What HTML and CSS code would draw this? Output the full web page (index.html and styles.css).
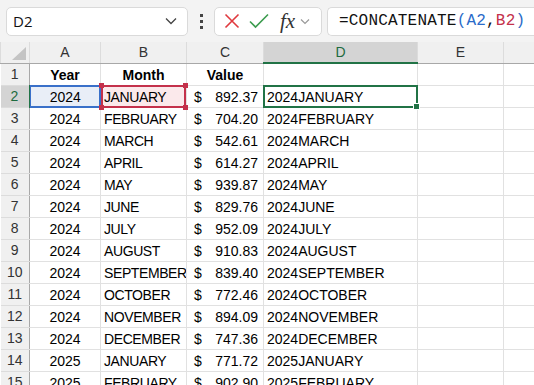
FILE: index.html
```html
<!DOCTYPE html>
<html lang="en">
<head>
    <meta charset="UTF-8">
    <title>Sheet</title>
    <link rel="stylesheet" href="styles.css">
</head>
<body>
    <div class="formula-bar">
        <div class="name-box">
            <span>D2</span>
            <svg class="chev" width="12" height="8" viewBox="0 0 12 8"><path d="M1 1.5 L6 6.5 L11 1.5" fill="none" stroke="#444" stroke-width="1.3"/></svg>
        </div>
        <div class="dots"><i></i><i></i><i></i></div>
        <div class="fx-box">
            <svg width="16" height="16" viewBox="0 0 16 16"><path d="M1.5 1.5 L14.5 14.5 M14.5 1.5 L1.5 14.5" stroke="#e0393e" stroke-width="1.6" fill="none"/></svg>
            <svg width="20" height="16" viewBox="0 0 20 16"><path d="M1 8.5 L6.5 14 L19 1.5" stroke="#3c9c4f" stroke-width="1.6" fill="none"/></svg>
            <span class="fx">fx</span>
            <svg width="10" height="7" viewBox="0 0 10 7"><path d="M1 1.5 L5 5.5 L9 1.5" fill="none" stroke="#999" stroke-width="1.2"/></svg>
        </div>
        <div class="formula">=CONCATENATE<span class="blue">(A2</span>,<span class="red">B2</span><span class="blue">)</span></div>
    </div>

    <div class="sheet">
        <table class="grid">
            <colgroup>
                <col style="width:29px">
                <col style="width:71px">
                <col style="width:86px">
                <col style="width:77px">
                <col style="width:154px">
                <col style="width:86px">
                <col style="width:60px">
            </colgroup>
            <thead>
                <tr>
                    <th class="corner"><span class="tri"></span></th>
                    <th>A</th><th>B</th><th>C</th><th class="active">D</th><th>E</th><th></th>
                </tr>
            </thead>
            <tbody id="rows">
                <tr>
                    <th>1</th>
                    <td class="c b">Year</td><td class="c b">Month</td><td class="c b">Value</td><td></td><td></td><td></td>
                </tr>
            </tbody>
        </table>
    </div>

    <script>
        // data rows
        const data = [
            ['2024', 'JANUARY', '892.37'],
            ['2024', 'FEBRUARY', '704.20'],
            ['2024', 'MARCH', '542.61'],
            ['2024', 'APRIL', '614.27'],
            ['2024', 'MAY', '939.87'],
            ['2024', 'JUNE', '829.76'],
            ['2024', 'JULY', '952.09'],
            ['2024', 'AUGUST', '910.83'],
            ['2024', 'SEPTEMBER', '839.40'],
            ['2024', 'OCTOBER', '772.46'],
            ['2024', 'NOVEMBER', '894.09'],
            ['2024', 'DECEMBER', '747.36'],
            ['2025', 'JANUARY', '771.72'],
            ['2025', 'FEBRUARY', '902.90']
        ];

        const tbody = document.getElementById('rows');
        data.forEach((row, i) => {
            const tr = document.createElement('tr');
            const first = i === 0;
            tr.innerHTML =
                `<th class="${first ? 'active' : ''}">${i + 2}</th>` +
                `<td class="c${first ? ' ref-a' : ''}"><span>${row[0]}</span></td>` +
                `<td class="clip${first ? ' ref-b' : ''}"><span>${row[1]}</span></td>` +
                `<td><div class="acct"><span>$</span><span>${row[2]}</span></div></td>` +
                `<td class="${first ? 'sel' : ''}"><span>${row[0]}${row[1]}</span></td>` +
                `<td></td><td></td>`;
            tbody.appendChild(tr);
        });
    </script>
</body>
</html>
```

FILE: styles.css
```css
body {
    margin: 0;
    background-color: #fff;
    font-family: "Liberation Sans", Arial, sans-serif;
    overflow: hidden;
    height: 385px;
}

.formula-bar {
    display: flex;
    align-items: center;
    height: 42px;
    background-color: #f3f3f3;
    padding-left: 6px;
    box-sizing: border-box;
}

.name-box {
    width: 182px;
    height: 29px;
    box-sizing: border-box;
    background-color: #fff;
    border: 1px solid #dadada;
    border-radius: 5px;
    display: flex;
    align-items: center;
    justify-content: space-between;
    padding: 0 10px 0 6px;
    font-family: "Open Sans", sans-serif;
    font-size: 15px;
    color: #111;
}

.dots {
    width: 26px;
    display: flex;
    flex-direction: column;
    align-items: center;
    gap: 3px;
}

.dots i {
    display: block;
    width: 3px;
    height: 3px;
    background-color: #444;
}

.fx-box {
    width: 108px;
    height: 29px;
    box-sizing: border-box;
    background-color: #fff;
    border: 1px solid #dadada;
    border-radius: 5px;
    display: flex;
    align-items: center;
    gap: 9px;
    padding-left: 9px;
}

.fx {
    font-family: "Liberation Serif", serif;
    font-style: italic;
    font-size: 21px;
    color: #333;
    margin-left: 2px;
    margin-right: -4px;
}

.formula {
    flex: 1;
    height: 29px;
    margin-left: 5px;
    box-sizing: border-box;
    background-color: #fff;
    border: 1px solid #dadada;
    border-right: none;
    border-radius: 5px 0 0 5px;
    padding-left: 11px;
    display: flex;
    align-items: center;
    font-family: "Liberation Mono", monospace;
    font-size: 16px;
    letter-spacing: 0.2px;
    color: #111;
    white-space: nowrap;
}

.blue {
    color: #2a6bc9;
}

.red {
    color: #c4314b;
}

.sheet {
    width: 534px;
    height: 343px;
    overflow: hidden;
}

.grid {
    table-layout: fixed;
    width: 563px;
    border-collapse: collapse;
    font-size: 14px;
    color: #000;
}

.grid tbody tr {
    height: 22px;
}

.grid th {
    background-color: #f0f0f0;
    font-weight: normal;
    color: #333;
    padding: 0;
    border: 1px solid #dcdcdc;
    border-top: none;
    text-align: center;
    line-height: 18px;
}

.grid thead th {
    border-bottom: 1px solid #a8a8a8;
    height: 20px;
}

.grid thead th.active {
    background-color: #d4d4d4;
    color: #1d6b3e;
    border-bottom: 2px solid #217346;
}

.grid tbody th {
    border-right: 1px solid #a8a8a8;
    border-left: none;
}

.grid tbody th.active {
    background-color: #d4d4d4;
    color: #1d6b3e;
    border-right: 2px solid #217346;
}

.corner {
    position: relative;
}

.tri {
    position: absolute;
    right: 3px;
    bottom: 3px;
    width: 0;
    height: 0;
    border-left: 14px solid transparent;
    border-bottom: 13px solid #c4c4c4;
}

.grid td {
    padding: 0 3px 1px;
    border: 1px solid #e1e1e1;
    vertical-align: bottom;
    white-space: nowrap;
    overflow: visible;
    line-height: 18px;
}

.grid td.clip {
    overflow: hidden;
    text-overflow: clip;
    letter-spacing: -0.4px;
    padding-right: 0;
}

.grid td.c {
    text-align: center;
}

.grid td.b {
    font-weight: bold;
}

.acct {
    display: flex;
    justify-content: space-between;
    padding: 0 2px 0 4px;
}

.ref-a, .ref-b, .sel {
    position: relative;
}

.ref-a {
    background-color: #e9eef7;
}

.ref-a::after {
    content: "";
    position: absolute;
    left: -1px;
    top: -1px;
    right: -1px;
    bottom: -1px;
    border: 2px solid #3a70c9;
    border-left-width: 1px;
}

.grid td.ref-b {
    background-color: #fbe9eb;
    overflow: visible;
}

.ref-b::after {
    content: "";
    position: absolute;
    left: 0;
    top: -1px;
    right: 0;
    bottom: -1px;
    border: 2px solid #c4314b;
}

.ref-b::before {
    content: "";
    position: absolute;
    left: -2px;
    top: -3px;
    right: -2px;
    bottom: -3px;
    background:
        linear-gradient(#c4314b, #c4314b) left top / 5px 5px no-repeat,
        linear-gradient(#c4314b, #c4314b) right top / 5px 5px no-repeat,
        linear-gradient(#c4314b, #c4314b) left bottom / 5px 5px no-repeat,
        linear-gradient(#c4314b, #c4314b) right bottom / 5px 5px no-repeat;
    z-index: 1;
}

.sel::after {
    content: "";
    position: absolute;
    left: -1px;
    top: -1px;
    right: -1px;
    bottom: -1px;
    border: 2px solid #217346;
}

.sel::before {
    content: "";
    position: absolute;
    right: -3px;
    bottom: -3px;
    width: 5px;
    height: 5px;
    background-color: #217346;
    border: 1px solid #fff;
    z-index: 1;
}

.ref-a span, .ref-b span, .sel span {
    position: relative;
    z-index: 2;
}
```
